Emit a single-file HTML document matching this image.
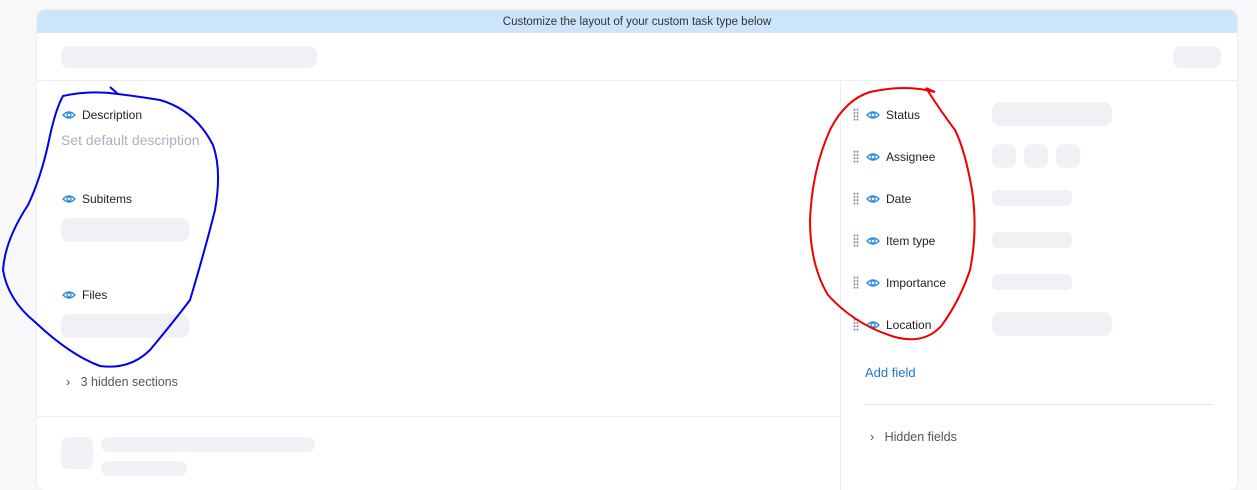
<!DOCTYPE html>
<html><head><style>
body{margin:0;width:1257px;height:479px;background:#f8f8fa;font-family:"Liberation Sans",sans-serif;position:relative;overflow:hidden}
.card{position:absolute;left:37px;top:10px;width:1200px;height:480px;background:#fff;border-radius:8px;box-shadow:0 0 3px rgba(0,0,0,.08);overflow:hidden}
.banner{height:23px;background:#cce5fb;font-size:11.5px;color:#333;text-align:center;line-height:24px}
.sk{position:absolute;background:#f0f1f5;border-radius:8px}
.lbl{position:absolute;font-size:12px;color:#222;display:flex;align-items:center;gap:6px}
.eye{width:14px;height:10px}
.grip{position:absolute;width:6px;height:13px;background-image:radial-gradient(circle,#9098a8 1px,transparent 1.2px);background-size:3px 3.3px}
.t{position:absolute;font-size:13px}
</style></head><body>
<div class="card">
<div class="banner">Customize the layout of your custom task type below</div>
<div class="sk" style="left:24px;top:36px;width:256px;height:22px"></div>
<div class="sk" style="left:1136px;top:36px;width:48px;height:22px"></div>
<div style="position:absolute;left:0;top:70px;width:1200px;height:1px;background:#eceef2"></div>
<div style="position:absolute;left:803px;top:71px;width:1px;height:420px;background:#eceef2"></div>
<div style="position:absolute;left:0;top:406px;width:803px;height:1px;background:#eceef2"></div>
<div style="position:absolute;left:828px;top:394px;width:348px;height:1px;background:#e4e6ea"></div>
</div>
<svg width="0" height="0" style="position:absolute"><defs><g id="e"><path d="M1 5 Q7 -1 13 5 Q7 11 1 5Z" fill="none" stroke="#2a8ad8" stroke-width="1.3"/><circle cx="7" cy="5" r="2" fill="none" stroke="#2a8ad8" stroke-width="1.3"/></g></defs></svg>
<div class="lbl" style="left:62px;top:108px"><svg class="eye"><use href="#e"/></svg>Description</div>
<div class="t" style="left:61px;top:132px;color:#a9b0c0;font-size:14px">Set default description</div>
<div class="lbl" style="left:62px;top:192px"><svg class="eye"><use href="#e"/></svg>Subitems</div>
<div class="sk" style="left:61px;top:218px;width:128px;height:24px"></div>
<div class="lbl" style="left:62px;top:288px"><svg class="eye"><use href="#e"/></svg>Files</div>
<div class="sk" style="left:61px;top:314px;width:128px;height:24px"></div>
<div class="t" style="left:66px;top:375px;color:#555;font-size:12.5px">›&nbsp;&nbsp;&nbsp;3 hidden sections</div>
<div class="sk" style="left:61px;top:437px;width:32px;height:32px"></div>
<div class="sk" style="left:101px;top:437px;width:214px;height:15px"></div>
<div class="sk" style="left:101px;top:461px;width:86px;height:15px"></div>

<div class="grip" style="left:853px;top:108px"></div><div class="lbl" style="left:866px;top:108px"><svg class="eye"><use href="#e"/></svg>Status</div>
<div class="grip" style="left:853px;top:150px"></div><div class="lbl" style="left:866px;top:150px"><svg class="eye"><use href="#e"/></svg>Assignee</div>
<div class="grip" style="left:853px;top:192px"></div><div class="lbl" style="left:866px;top:192px"><svg class="eye"><use href="#e"/></svg>Date</div>
<div class="grip" style="left:853px;top:234px"></div><div class="lbl" style="left:866px;top:234px"><svg class="eye"><use href="#e"/></svg>Item type</div>
<div class="grip" style="left:853px;top:276px"></div><div class="lbl" style="left:866px;top:276px"><svg class="eye"><use href="#e"/></svg>Importance</div>
<div class="grip" style="left:853px;top:318px"></div><div class="lbl" style="left:866px;top:318px"><svg class="eye"><use href="#e"/></svg>Location</div>
<div class="sk" style="left:992px;top:102px;width:120px;height:24px"></div>
<div class="sk" style="left:992px;top:144px;width:24px;height:24px"></div>
<div class="sk" style="left:1024px;top:144px;width:24px;height:24px"></div>
<div class="sk" style="left:1056px;top:144px;width:24px;height:24px"></div>
<div class="sk" style="left:992px;top:190px;width:80px;height:16px;border-radius:5px"></div>
<div class="sk" style="left:992px;top:232px;width:80px;height:16px;border-radius:5px"></div>
<div class="sk" style="left:992px;top:274px;width:80px;height:16px;border-radius:5px"></div>
<div class="sk" style="left:992px;top:312px;width:120px;height:24px"></div>
<div class="t" style="left:865px;top:365px;color:#1f76d2">Add field</div>
<div class="t" style="left:870px;top:430px;color:#555;font-size:12.5px">›&nbsp;&nbsp;&nbsp;Hidden fields</div>

<svg width="1257" height="479" style="position:absolute;left:0;top:0" fill="none" stroke-width="2">
<path stroke="#0000ee" d="M110 87 L118 94 M118 94 Q90 90 63 96 Q55 110 48 145 Q40 180 28 205 Q5 240 3 270 Q8 300 35 322 Q70 355 100 366 Q130 370 150 350 Q175 320 190 300 Q205 250 215 210 Q222 170 213 145 Q195 110 160 100 Q135 96 118 94"/>
<path stroke="#ee0000" d="M926 88 L935 92 M935 92 Q905 84 870 92 Q845 100 830 130 Q812 170 810 220 Q810 265 828 295 Q855 325 895 337 Q925 345 942 325 Q960 300 970 270 Q978 230 972 190 Q965 150 955 130 Q940 110 926 88"/>
</svg>
</body></html>
